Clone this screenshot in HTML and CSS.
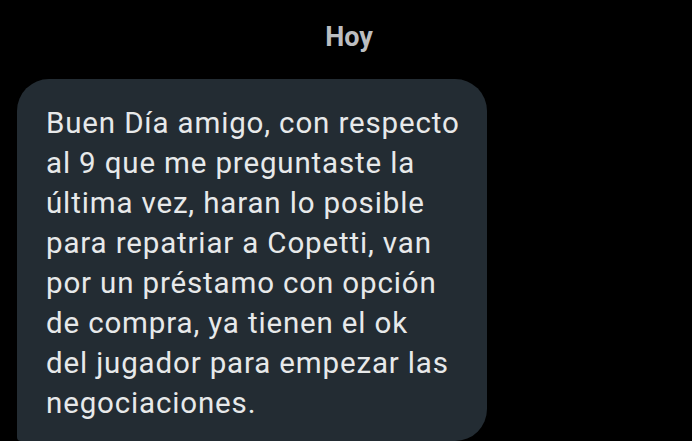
FILE: index.html
```html
<!DOCTYPE html>
<html lang="es">
<head>
<meta charset="utf-8">
<link rel="stylesheet" href="styles.css">
</head>
<body>
<div class="chat">
  <div class="day">Hoy</div>
  <div class="bubble">
    <p class="msg">Buen Día amigo, con respecto<br>al 9 que me preguntaste la<br>última vez, haran lo posible<br>para repatriar a Copetti, van<br>por un préstamo con opción<br>de compra, ya tienen el ok<br>del jugador para empezar las<br>negociaciones.</p>
  </div>
</div>
</body>
</html>
```
FILE: styles.css
```css
html, body {
  margin: 0;
  padding: 0;
  background: #000;
  height: 100%;
  overflow: hidden;
}
.chat {
  font-family: Roboto, "Noto Sans", sans-serif;
  display: flex;
  flex-direction: column;
}
.day {
  text-align: center;
  padding-left: 6px;
  margin-top: 21px;
  height: 32px;
  line-height: 32px;
  font-size: 27px;
  font-weight: 700;
  color: #bcbec1;
}
.bubble {
  margin-top: 26px;
  margin-left: 17px;
  width: 470px;
  box-sizing: border-box;
  background: #232c33;
  border-radius: 32px 32px 32px 4px;
  padding: 24px 16px 18px 29px;
}
.msg {
  margin: 0;
  font-size: 29.5px;
  line-height: 40px;
  letter-spacing: 0.85px;
  color: #e7e9ea;
  white-space: nowrap;
}
```
